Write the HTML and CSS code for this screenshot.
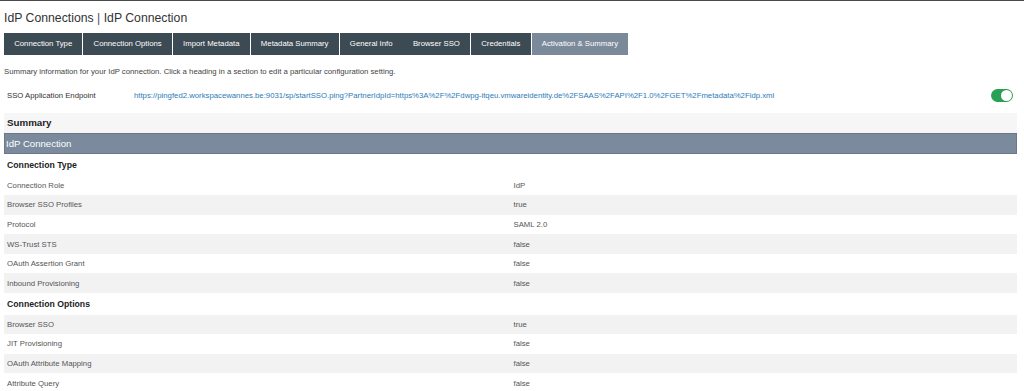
FILE: index.html
```html
<!DOCTYPE html>
<html lang="en">

<head>
	<meta charset="UTF-8">
	<meta name="viewport" content="width=device-width, initial-scale=1.0">
	<title>IdP Connection</title>
	<link rel="stylesheet" href="styles.css">
</head>

<body>
	<div class="page">
		<h1 class="title">IdP Connections <span class="sep">|</span> IdP Connection</h1>
		<ul class="tabs">
			<li class="tab">Connection Type</li>
			<li class="tab">Connection Options</li>
			<li class="tab">Import Metadata</li>
			<li class="tab">Metadata Summary</li>
			<li class="tab tab-joined">General Info</li>
			<li class="tab">Browser SSO</li>
			<li class="tab">Credentials</li>
			<li class="tab active">Activation &amp; Summary</li>
		</ul>
		<p class="intro">Summary information for your IdP connection. Click a heading in a section to edit a particular configuration setting.</p>
		<div class="endpoint">
			<span class="endpoint-label">SSO Application Endpoint</span>
			<a class="endpoint-link" href="#">https://pingfed2.workspacewannes.be:9031/sp/startSSO.ping?PartnerIdpId=https%3A%2F%2Fdwpg-itqeu.vmwareidentity.de%2FSAAS%2FAPI%2F1.0%2FGET%2Fmetadata%2Fidp.xml</a>
			<span class="toggle"><span class="knob"></span></span>
		</div>
		<div class="summary-head">Summary</div>
		<div class="section-bar">IdP Connection</div>
		<table class="summary">
			<tr class="group"><td colspan="2">Connection Type</td></tr>
			<tr><td>Connection Role</td><td>IdP</td></tr>
			<tr class="alt"><td>Browser SSO Profiles</td><td>true</td></tr>
			<tr><td>Protocol</td><td>SAML 2.0</td></tr>
			<tr class="alt"><td>WS-Trust STS</td><td>false</td></tr>
			<tr><td>OAuth Assertion Grant</td><td>false</td></tr>
			<tr class="alt"><td>Inbound Provisioning</td><td>false</td></tr>
			<tr class="group"><td colspan="2">Connection Options</td></tr>
			<tr class="alt"><td>Browser SSO</td><td>true</td></tr>
			<tr><td>JIT Provisioning</td><td>false</td></tr>
			<tr class="alt"><td>OAuth Attribute Mapping</td><td>false</td></tr>
			<tr><td>Attribute Query</td><td>false</td></tr>
		</table>
	</div>
</body>

</html>
```

FILE: styles.css
```css
body
{
	font-family: 'Liberation Sans', Arial, sans-serif;
	font-size: 7.75px;
	color: #555;
	background-color: #fff;
	margin: 0;
	border-top: 1px solid #4a4a4a;
	overflow: hidden;
}

.page
{
	padding: 0 7px 0 4px;
}

.title
{
	margin: 0;
	padding-top: 10px;
	font-size: 12.25px;
	line-height: 14px;
	font-weight: normal;
	color: #333;
}

.sep
{
	color: #555;
}

.tabs
{
	display: flex;
	gap: 1px;
	list-style: none;
	margin: 8px 0 0 0;
	padding: 0;
}

.tab
{
	height: 22px;
	line-height: 22px;
	padding: 0 10.2px;
	background-color: #3c4a53;
	color: #fff;
	white-space: nowrap;
}

.tab-joined
{
	margin-right: -1px;
}

.tab.active
{
	background-color: #7b8a9b;
}

.intro
{
	margin: 10.5px 0 0 0;
	line-height: 12px;
	color: #444;
}

.endpoint
{
	display: flex;
	align-items: center;
	height: 14px;
	margin-top: 10.5px;
	padding: 0 4px 0 3px;
}

.endpoint-label
{
	width: 127px;
	color: #333;
}

.endpoint-link
{
	flex: 1;
	color: #2b7cb8;
	text-decoration: none;
}

.toggle
{
	display: flex;
	justify-content: flex-end;
	align-items: center;
	width: 22px;
	height: 13px;
	padding: 0 1px;
	box-sizing: border-box;
	border-radius: 7px;
	background-color: #2aa055;
}

.knob
{
	width: 11px;
	height: 11px;
	border-radius: 50%;
	background-color: #fff;
}

.summary-head
{
	margin-top: 11px;
	height: 20px;
	line-height: 20px;
	padding-left: 3px;
	background-color: #f6f6f6;
	font-size: 9.75px;
	font-weight: bold;
	color: #222;
}

.section-bar
{
	height: 19px;
	line-height: 19px;
	padding-left: 1px;
	background-color: #7b8a9c;
	border: 1px solid #6a788a;
	font-size: 9.6px;
	color: #fff;
}

.summary
{
	width: 100%;
	border-collapse: collapse;
	table-layout: fixed;
}

.summary td
{
	height: 19.6px;
	padding: 0 3px;
	vertical-align: middle;
}

.summary .alt td
{
	background-color: #f2f2f3;
}

.summary .group td
{
	height: 21.5px;
	font-size: 8.7px;
	font-weight: bold;
	color: #222;
}
```
